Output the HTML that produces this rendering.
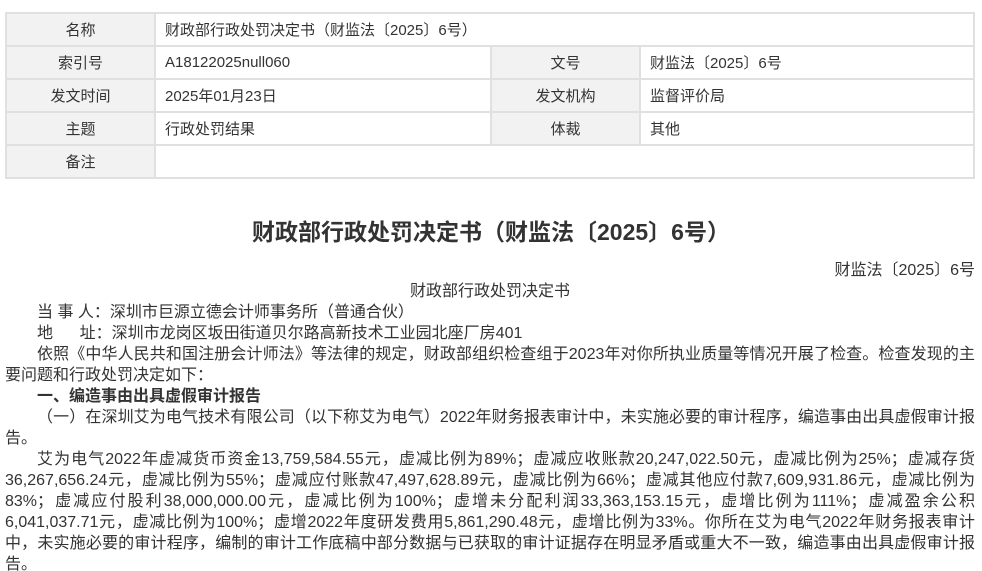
<!DOCTYPE html>
<html><head><meta charset="utf-8">
<style>
html,body{margin:0;padding:0;background:#fff;width:982px;height:571px;overflow:hidden}
body{font-family:"Liberation Sans","Noto Sans CJK SC",sans-serif;color:#333;position:relative}
table{position:absolute;left:5px;top:12px;width:970px;border-collapse:collapse;font-size:15px}
td{border:2px solid #e0e0e0;height:31px;padding:0 9px;}
td.l{background:#f2f2f2;text-align:center;width:129px}
td.v{width:316px}
h1{position:absolute;left:0;width:982px;top:214px;margin:0;text-align:center;font-size:23px;font-weight:bold;line-height:36px;color:#333}
.body{position:absolute;left:5px;top:260px;width:970px;font-size:16px;line-height:21px;text-align:justify}
.body p{margin:0}
.r{text-align:right}
.c{text-align:center}
.i{text-indent:32px}
</style></head><body>
<table>
<tr><td class="l">名称</td><td colspan="3">财政部行政处罚决定书（财监法〔2025〕6号）</td></tr>
<tr><td class="l">索引号</td><td class="v">A18122025null060</td><td class="l">文号</td><td>财监法〔2025〕6号</td></tr>
<tr><td class="l">发文时间</td><td class="v">2025年01月23日</td><td class="l">发文机构</td><td>监督评价局</td></tr>
<tr><td class="l">主题</td><td class="v">行政处罚结果</td><td class="l">体裁</td><td>其他</td></tr>
<tr><td class="l">备注</td><td colspan="3"></td></tr>
</table>
<h1>财政部行政处罚决定书（财监法〔2025〕6号）</h1>
<div class="body">
<p class="r">财监法〔2025〕6号</p>
<p class="c">财政部行政处罚决定书</p>
<p class="i">当 事 人：深圳市巨源立德会计师事务所（普通合伙）</p>
<p class="i">地&nbsp;&nbsp;&nbsp;&nbsp;&nbsp;&nbsp;址：深圳市龙岗区坂田街道贝尔路高新技术工业园北座厂房401</p>
<p class="i">依照《中华人民共和国注册会计师法》等法律的规定，财政部组织检查组于2023年对你所执业质量等情况开展了检查。检查发现的主要问题和行政处罚决定如下：</p>
<p class="i"><b>一、编造事由出具虚假审计报告</b></p>
<p class="i">（一）在深圳艾为电气技术有限公司（以下称艾为电气）2022年财务报表审计中，未实施必要的审计程序，编造事由出具虚假审计报告。</p>
<p class="i">艾为电气2022年虚减货币资金13,759,584.55元，虚减比例为89%；虚减应收账款20,247,022.50元，虚减比例为25%；虚减存货36,267,656.24元，虚减比例为55%；虚减应付账款47,497,628.89元，虚减比例为66%；虚减其他应付款7,609,931.86元，虚减比例为83%；虚减应付股利38,000,000.00元，虚减比例为100%；虚增未分配利润33,363,153.15元，虚增比例为111%；虚减盈余公积6,041,037.71元，虚减比例为100%；虚增2022年度研发费用5,861,290.48元，虚增比例为33%。你所在艾为电气2022年财务报表审计中，未实施必要的审计程序，编制的审计工作底稿中部分数据与已获取的审计证据存在明显矛盾或重大不一致，编造事由出具虚假审计报告。</p>
</div>
</body></html>
